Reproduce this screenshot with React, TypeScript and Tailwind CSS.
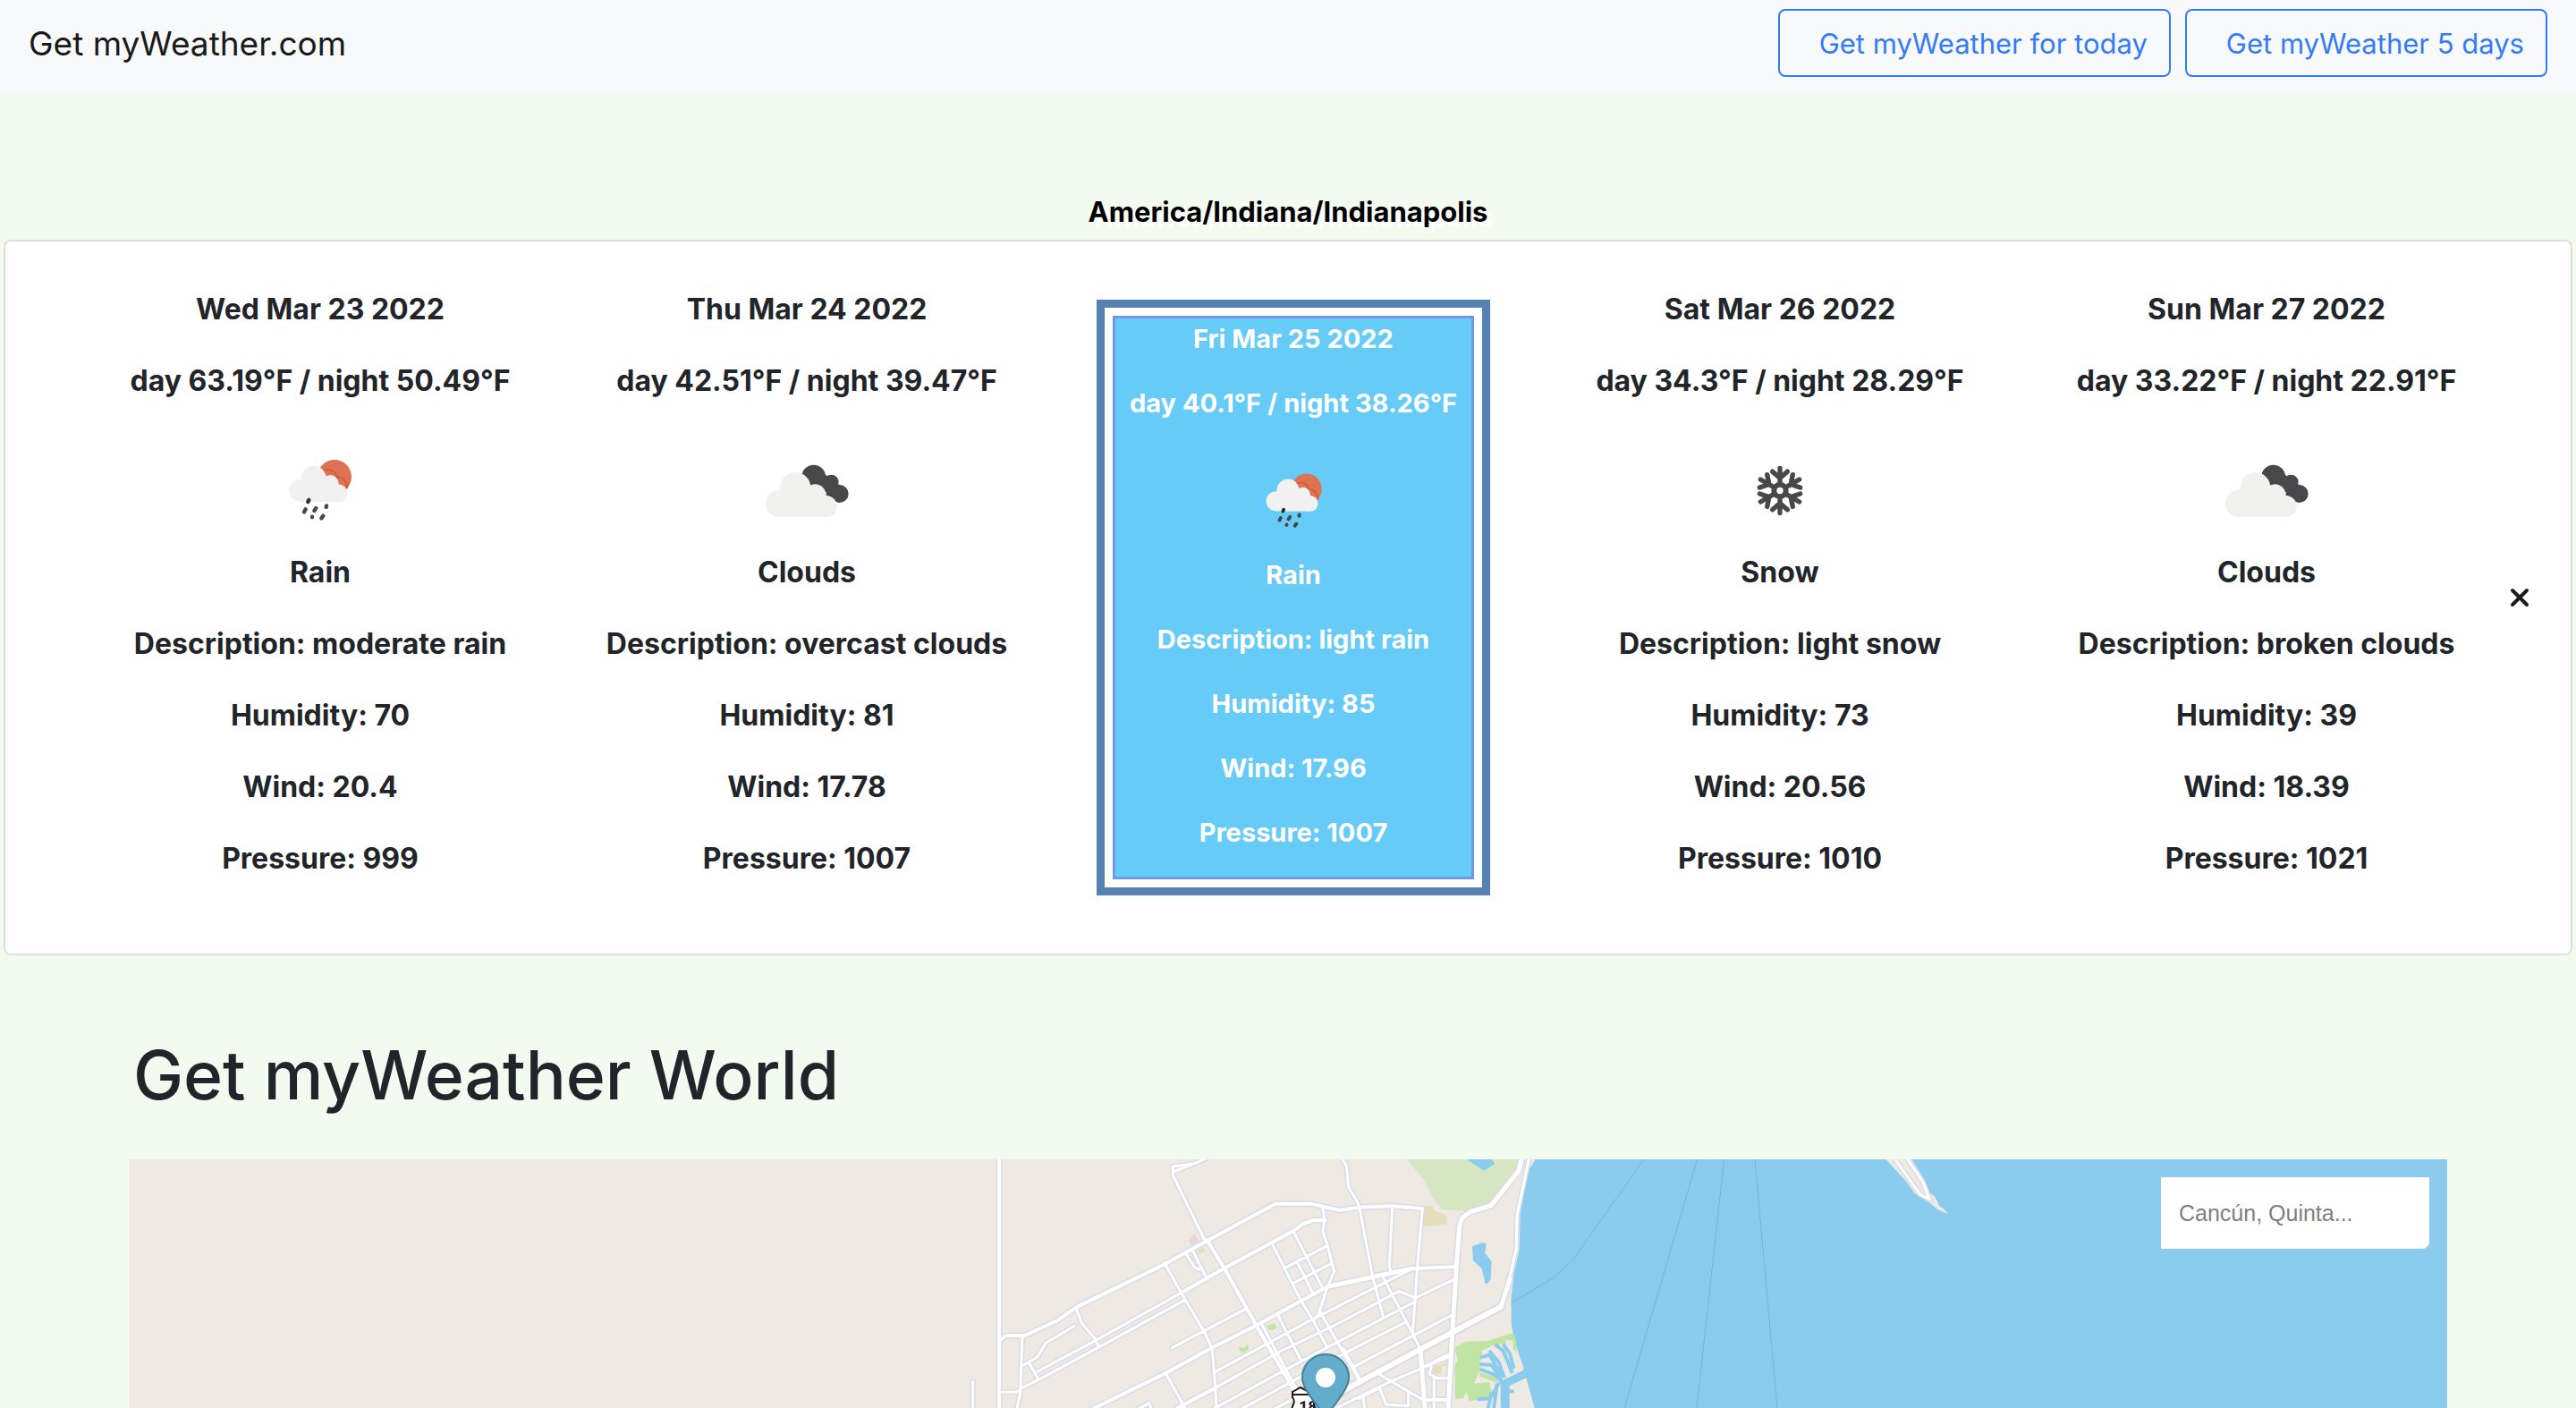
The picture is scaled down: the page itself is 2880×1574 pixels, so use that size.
import React from "react";

type Kind = "rain" | "clouds" | "snow";

interface Day {
  date: string;
  day: string;
  night: string;
  kind: Kind;
  main: string;
  description: string;
  humidity: string;
  wind: string;
  pressure: string;
  featured?: boolean;
}

const days: Day[] = [
  { date: "Wed Mar 23 2022", day: "63.19", night: "50.49", kind: "rain", main: "Rain", description: "moderate rain", humidity: "70", wind: "20.4", pressure: "999" },
  { date: "Thu Mar 24 2022", day: "42.51", night: "39.47", kind: "clouds", main: "Clouds", description: "overcast clouds", humidity: "81", wind: "17.78", pressure: "1007" },
  { date: "Fri Mar 25 2022", day: "40.1", night: "38.26", kind: "rain", main: "Rain", description: "light rain", humidity: "85", wind: "17.96", pressure: "1007", featured: true },
  { date: "Sat Mar 26 2022", day: "34.3", night: "28.29", kind: "snow", main: "Snow", description: "light snow", humidity: "73", wind: "20.56", pressure: "1010" },
  { date: "Sun Mar 27 2022", day: "33.22", night: "22.91", kind: "clouds", main: "Clouds", description: "broken clouds", humidity: "39", wind: "18.39", pressure: "1021" },
];

function RainArt() {
  return (
    <g transform="translate(17 18) scale(0.3333)">
      <circle cx="192" cy="99" r="57" fill="#dd7353" />
      <path d="M152 82a30 30 0 0 1 48 18a34 34 0 0 1 34 38" fill="none" stroke="#d9583a" strokeWidth="6" />
      <g fill="#f1f1f2">
        <circle cx="122" cy="104" r="42" />
        <circle cx="77" cy="145" r="37" />
        <circle cx="178" cy="120" r="27" />
        <circle cx="205" cy="154" r="30" />
        <rect x="77" y="118" width="128" height="65" />
      </g>
      <g stroke="#47474a" strokeWidth="13" strokeLinecap="round">
        <path d="M106 177L103 183" stroke="#2c2c2e" />
        <path d="M95 208L90 217M130 204L124 213M117 233L117 235M165 196L164 201M154 230L148 238" />
      </g>
    </g>
  );
}

function CloudsArt() {
  return (
    <g transform="translate(3 18) scale(0.3333)">
      <g fill="#48484a">
        <circle cx="209" cy="99" r="40" />
        <circle cx="268" cy="117" r="25" />
        <circle cx="296" cy="156" r="30" />
        <path d="M175 90L245 90L300 130L296 186L230 160Z" />
      </g>
      <g fill="#f1f1ef">
        <circle cx="148" cy="135" r="51" />
        <circle cx="92" cy="189" r="45" />
        <circle cx="214" cy="160" r="36" />
        <circle cx="251" cy="198" r="36" />
        <rect x="92" y="150" width="159" height="84" />
      </g>
    </g>
  );
}

function SnowArt() {
  return (
    <g transform="translate(65 66.5) scale(0.3333)" fill="none" stroke="#48484b" strokeWidth="16" strokeLinecap="round">
      <circle r="20" strokeWidth="18" />
      {[0, 60, 120, 180, 240, 300].map((a) => (
        <path key={a} transform={`rotate(${a})`} d="M0 -28V-75M-25 -64L0 -42L25 -64" />
      ))}
    </g>
  );
}

function WeatherIcon({ kind, className }: { kind: Kind; className: string }) {
  return (
    <svg viewBox="0 0 130 102" className={className} role="img" aria-label={kind}>
      {kind === "rain" && <RainArt />}
      {kind === "clouds" && <CloudsArt />}
      {kind === "snow" && <SnowArt />}
    </svg>
  );
}

function DayLines({ d, icon }: { d: Day; icon: string }) {
  return (
    <>
      <p>{d.date}</p>
      <p>{`day ${d.day}°F / night ${d.night}°F`}</p>
      <WeatherIcon kind={d.kind} className={icon} />
      <p>{d.main}</p>
      <p>{`Description: ${d.description}`}</p>
      <p>{`Humidity: ${d.humidity}`}</p>
      <p>{`Wind: ${d.wind}`}</p>
      <p>{`Pressure: ${d.pressure}`}</p>
    </>
  );
}

function DayColumn({ d }: { d: Day }) {
  if (d.featured) {
    return (
      <article className="self-center justify-self-center border-9 border-[#5582b2] bg-white p-[9px]">
        <div className="flex w-[404px] flex-col items-center gap-[29px] border-3 border-[#6f98ea] bg-[#66cbf6] pt-px pb-7 text-[29px] leading-[43px] whitespace-nowrap text-white">
          <DayLines d={d} icon="h-[91px] w-[117px]" />
        </div>
      </article>
    );
  }
  return (
    <article className="flex flex-col items-center gap-8 pt-[52px] pb-[82px] text-[32px] leading-[48px] whitespace-nowrap">
      <DayLines d={d} icon="h-[102px] w-[130px]" />
    </article>
  );
}

const minorRoads =
  "M17 795V900 M141 643L136 830L125 900 M83 829H125L140 815L185 785L330 680L548 520 M272 607L200 664L178 712L145 738 M158 732L182 787 M172 765L325 655L540 495 M276 548L290 598L322 648L333 678 M604 44L570 62L518 72V100L595 312 M520 90L604 44 M497 395L545 510L596 625L616 680L622 770L628 900 M552 367L572 410L584 418 M568 355L602 445 M500 765L548 882 M516 680L700 550 M768 335L838 520L870 590L905 680 M820 290L895 485 M893 206L898 252L893 290L905 335L922 425L905 475L885 560L870 590 M905 338L798 413 M915 398L820 463 M828 390L868 495 M942 44L953 72L958 140L978 185L985 209L1018 440L1045 577 M1068 205L1060 405L1064 425 M1143 213L1130 415L1118 640 M1410 44L1380 235L1378 350L1362 440L1340 542 M1226 448L1125 513L1085 490L930 600L790 690L628 812 M1125 525L910 675L770 775L620 885 M1110 420L860 590L622 762 M1100 595L945 700L800 805L690 885 M1218 570L1118 640L970 745 M1045 445L1108 605L1138 685 M740 600L830 825 M780 568L840 725 M885 555L985 790 M945 683L988 790 M1210 710L1060 795L915 890 M1210 701L1140 748 M1030 765L1145 855 M1035 812L1052 870L1108 875V830 M1035 815L985 850 M1165 745L1160 768L1180 782H1210 M1172 782V900 M995 850L1000 900 M425 890L458 866L466 890 M822 850L765 890";
const midRoads =
  "M83 44V900 M83 658L100 639H147L230 588L275 545L497 400L605 320L775 197H862L893 206L936 219L985 209L1068 205L1143 213 M540 495L645 415L820 288L845 264L870 252H900 M595 312L605 322L650 420L727 605L820 820 M310 890L500 765L616 680L727 605L905 475 M1115 415L1228 408 M628 812L530 882 M1145 855H1208";
const majorRoads =
  "M1392 44L1385 85L1315 203L1262 225L1242 245L1236 270L1228 410L1218 628L1207 900 M905 475L1115 415 M1138 685L1150 900 M1362 450L1340 542";
const avenue = "M1340 542L1218 628L1138 685L985 795L890 865";

function WorldMap() {
  return (
    <svg viewBox="0 0 2592 278" preserveAspectRatio="xMidYMin slice" className="block h-full w-full" role="img" aria-label="Street map">
      <rect width="2592" height="2000" fill="#eee9e2" />
      <g transform="translate(936 -16) scale(0.44643 0.33333)">
        <path fill="#8bccee" d="M1425 40L1425 50L1410 82L1400 140L1388 230L1386 350L1372 430L1365 520L1366 605L1375 660L1388 715L1397 748L1390 770L1402 778L1424 882L1430 920H3720V40Z" />
        <path fill="#d6e6c3" d="M1100 40L1148 120L1165 165L1188 215L1250 222L1315 200L1388 75L1392 40Z" />
        <path fill="#8bccee" d="M1244 40L1297 86L1324 64L1314 40Z M1268 340L1290 328L1303 330L1300 363L1316 390L1314 450L1306 465L1300 464L1292 415L1270 388Z" />
        <path fill="#e4deba" d="M1147 205L1168 203L1170 218L1204 236L1203 266L1147 272Z M580 350L596 345L598 358L584 367Z M1170 745L1204 729L1206 740L1192 742L1190 768L1170 765Z" />
        <path fill="#e8d4da" d="M571 295L585 325L580 335L566 338L558 320Z" />
        <path fill="#c0e4a4" d="M1223 680L1252 659L1306 657L1370 630L1376 645L1380 695L1370 685V655L1352 655V668H1325L1292 690L1285 760L1272 800L1310 795L1316 825L1308 845L1260 860L1254 828L1245 850L1225 852L1224 740L1232 720Z M1285 762L1330 780L1333 797L1325 795L1286 775Z M755 605L772 597L779 612L768 621L756 618Z M683 678L698 680L706 667L708 685L694 698L686 692Z" />
        <g fill="none" stroke="#8bccee">
          <path vectorEffect="non-scaling-stroke" strokeWidth="4" d="M1325 668L1345 690L1358 730L1368 765 M1345 668L1362 700L1372 750 M1310 690L1335 730L1348 780 M1288 712L1312 704L1336 765L1340 800 M1287 735L1315 738L1335 772 M1287 752L1320 768L1342 790 M1335 798L1312 850L1280 853 M1316 830L1305 900 M1330 800L1320 900 M1345 828L1372 826" />
          <path vectorEffect="non-scaling-stroke" strokeWidth="9" d="M1400 768L1345 803" />
          <path vectorEffect="non-scaling-stroke" strokeWidth="10" d="M1350 795V900" />
        </g>
        <g fill="none" stroke="#d9dbe8" strokeLinejoin="round" strokeLinecap="round">
          <path vectorEffect="non-scaling-stroke" strokeWidth="6" d={minorRoads} />
          <path vectorEffect="non-scaling-stroke" strokeWidth="7" d={midRoads} />
          <path vectorEffect="non-scaling-stroke" strokeWidth="8" d={majorRoads} />
          <path vectorEffect="non-scaling-stroke" strokeWidth="10" d={avenue} />
        </g>
        <g fill="none" stroke="#ffffff" strokeLinejoin="round" strokeLinecap="round">
          <path vectorEffect="non-scaling-stroke" strokeWidth="3" d={minorRoads} />
          <path vectorEffect="non-scaling-stroke" strokeWidth="4" d={midRoads} />
          <path vectorEffect="non-scaling-stroke" strokeWidth="5" d={majorRoads} />
          <path vectorEffect="non-scaling-stroke" strokeWidth="6" d={avenue} />
        </g>
      </g>
      <g transform="translate(1336 -16) scale(0.4847 0.33333)">
        <path fill="none" stroke="#74b3e2" vectorEffect="non-scaling-stroke" d="M742 40L575 385L530 445L436 527 M863 40L690 900 M924 40L859 900 M994 40L1047 900" />
        <path fill="#eee9e2" d="M1292 40L1320 85L1345 125L1365 166L1378 175L1397 193L1415 215L1440 232L1430 214L1420 205L1410 175L1395 155L1385 115L1370 80L1353 40Z" />
        <path fill="none" stroke="#d9dbe8" strokeWidth="6" strokeLinejoin="round" vectorEffect="non-scaling-stroke" d="M1314 40L1375 165L1398 183L1382 125L1343 40" />
        <path fill="none" stroke="#ffffff" strokeWidth="3" strokeLinejoin="round" vectorEffect="non-scaling-stroke" d="M1314 40L1375 165L1398 183L1382 125L1343 40" />
      </g>
      <path fill="#ffffff" stroke="#1c1c1c" strokeWidth="2" d="M1301 263V260L1310 255L1325 263V320H1302V284Q1299 280 1302 274Q1304 270 1301 266Z" />
      <path stroke="#1c1c1c" strokeWidth="2" d="M1300 263H1326" />
      <text x="1308" y="283" fontSize="18" fontWeight="700" fill="#1c1c1c" className="font-['Roboto',sans-serif]">
        180
      </text>
      <g transform="translate(1311 217) scale(2)">
        <path fill="#62adcb" d="M27 13.5C27 19.07 20.25 27 14.75 34.5C14.02 35.5 12.98 35.5 12.25 34.5C6.75 27 0 19.22 0 13.5C0 6.04 6.04 0 13.5 0C20.96 0 27 6.04 27 13.5Z" />
        <path fill="none" stroke="#4a8298" d="M26.5 13.5C26.5 19.07 19.85 27 14.35 34.2M12.65 34.2C7.15 27 .5 19.22 .5 13.5C.5 6.3 6.3 .5 13.5 .5C20.7 .5 26.5 6.3 26.5 13.5" />
        <circle cx="13.5" cy="13.5" r="5.5" fill="#ffffff" />
      </g>
    </svg>
  );
}

const navButton =
  "rounded-lg border-2 border-[#347cf7] pt-[13px] pr-6 pb-[11px] pl-11 text-[31px] leading-[48px] text-[#347cf7]";

export default function App() {
  return (
    <div className="flex min-h-screen flex-col bg-[#f3faef] font-['Inter',sans-serif] text-[#212529]">
      <nav className="flex items-center justify-between bg-[#f8f9fb] px-8 pt-[10px] pb-[18px]">
        <a href="#" className="pt-0.5 text-[37px] leading-[60px] text-[#1a1a1a]">Get myWeather.com</a>
        <div className="flex gap-4">
          <button type="button" className={navButton}>Get myWeather for today</button>
          <button type="button" className={navButton}>Get myWeather 5 days</button>
        </div>
      </nav>

      <main className="flex flex-1 flex-col">
        <h2 className="mt-[109px] mb-[7px] text-center text-[31px] leading-[48px] font-bold text-black [text-shadow:6px_6px_0_#ffffff]">
          America/Indiana/Indianapolis
        </h2>
        <section className="mx-1 flex items-center rounded-lg border-2 border-[#dddfdf] bg-white pr-[46px] pl-20 font-bold">
          <div className="grid flex-1 grid-cols-5">
            {days.map((d) => (
              <DayColumn key={d.date} d={d} />
            ))}
          </div>
          <button type="button" aria-label="Close" className="flex w-[22px] items-center justify-center">
            <svg viewBox="0 0 22 22" className="size-[22px]">
              <path d="M3 3L19 19M19 3L3 19" stroke="#1c1c1c" strokeWidth="4" strokeLinecap="round" />
            </svg>
          </button>
        </section>

        <h1 className="mx-[149px] mt-[86px] mb-[46px] text-[75px] leading-[96px] font-medium">Get myWeather World</h1>

        <section className="relative mx-[5%] min-h-[278px] flex-1 overflow-hidden">
          <div className="absolute inset-0">
            <WorldMap />
          </div>
          <input
            type="text"
            aria-label="Search for a city"
            placeholder="Cancún, Quinta..."
            className="absolute top-5 right-5 h-20 w-[300px] rounded-br-lg bg-white px-5 font-['Liberation_Sans',sans-serif] text-[25px] text-[#333333] placeholder:text-[#7f7f7f]"
          />
        </section>
      </main>
    </div>
  );
}
